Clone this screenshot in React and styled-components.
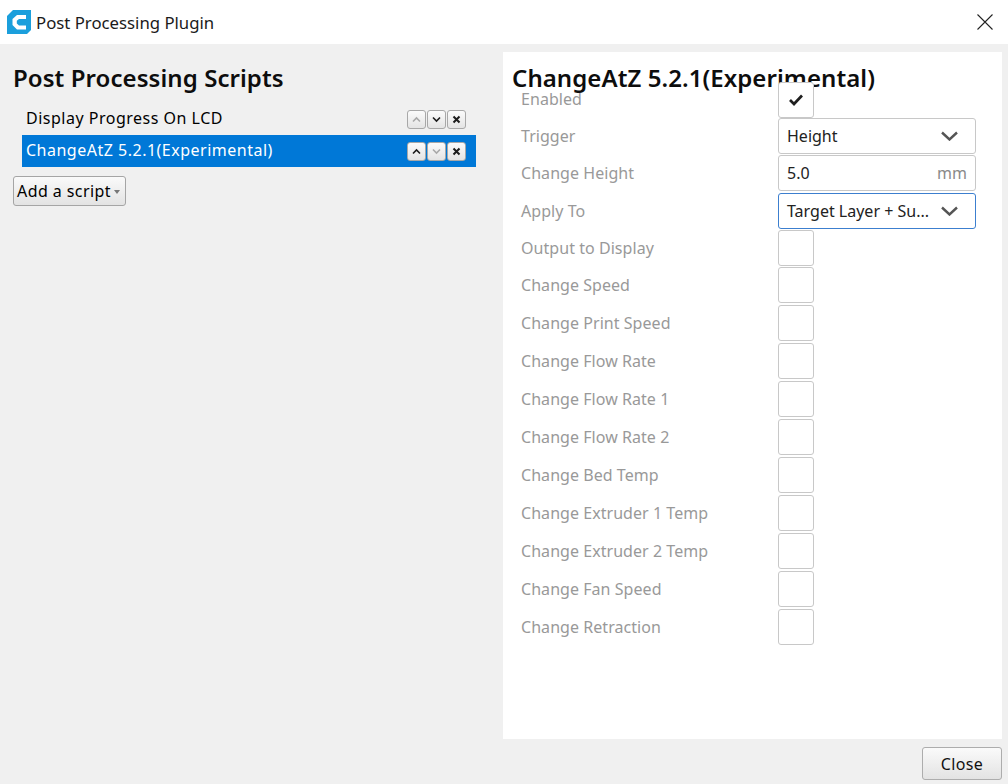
import React from "react";
import styled, { createGlobalStyle } from "styled-components";

const Global = createGlobalStyle`
  html, body { margin: 0; padding: 0; background: #efefef; }
  * { box-sizing: border-box; }
`;

const Window = styled.div`
  width: 1008px; height: 784px; overflow: hidden;
  display: flex; flex-direction: column;
  background: #f0f0f0;
  font-family: "Noto Sans", sans-serif;
  color: #111;
`;
const TitleBar = styled.header`
  height: 44px; flex: none; background: #fff;
  display: flex; align-items: center;
  padding: 0 14px 0 7px; gap: 5px;
`;
const TitleText = styled.div`
  flex: 1; font-size: 16.75px; color: #1a1a1a;
`;
const Body = styled.main`
  height: 695px; flex: none; display: flex; padding-top: 8px;
`;
const LeftPane = styled.section`
  width: 503px; flex: none; padding: 11px 27px 0 13px;
`;
const PaneHeading = styled.h1`
  margin: 0; font-size: 24px; line-height: 30px; font-weight: 600; color: #0d0d0d;
  letter-spacing: 0.07px; white-space: nowrap;
`;
const ScriptList = styled.div`
  margin: 10px 0 0 9px; display: flex; flex-direction: column;
`;
const ScriptRow = styled.div`
  height: 32px; padding: 0 10px 0 4px;
  display: flex; align-items: center; justify-content: space-between;
  background: ${p => (p.$selected ? "#0078d7" : "transparent")};
  color: ${p => (p.$selected ? "#fff" : "#000")};
`;
const ScriptName = styled.span`
  margin-bottom: 2px; font-size: 16px; letter-spacing: 0.5px;
`;
const RowButtons = styled.div`
  display: flex; gap: 1px;
`;
const MiniButton = styled.button`
  width: 19px; height: 19px; padding: 0; display: flex; align-items: center; justify-content: center;
  border: 1px solid #a8a8a8; border-radius: 3px;
  background: linear-gradient(#fbfbfb, #e4e4e4);
  color: ${p => (p.$dim ? "#a9a9a9" : "#1c1c1c")};
`;
const AddButton = styled.button`
  margin-top: 9px; width: 113px; height: 30px; padding: 0 0 1px 3px;
  display: flex; align-items: center;
  border: 1px solid #a5a5a5; border-radius: 3px;
  background: linear-gradient(#fafafa, #e3e3e3);
  font: 16px "Noto Sans", sans-serif; color: #000; letter-spacing: 0.43px;
`;
const Caret = styled.span`
  margin-left: 3px; margin-top: 2px; width: 0; height: 0;
  border-left: 3.5px solid transparent; border-right: 3.5px solid transparent;
  border-top: 4px solid #777;
`;
const RightPane = styled.section`
  width: 499px; height: 687px; flex: none; background: #fff; padding: 11px 0 0 9px;
`;
const SettingsList = styled.div`
  margin-top: -11px; padding-left: 9px;
  display: flex; flex-direction: column; position: relative;
`;
const SettingRow = styled.div`
  height: ${p => p.$h}px; display: flex; align-items: flex-start;
`;
const SettingLabel = styled.div`
  width: 257px; height: 36px; line-height: ${p => p.$lh}px; font-size: 16px; letter-spacing: 0.05px; color: #999;
`;
const CheckBox = styled.div`
  width: 36px; height: 36px; border: 1px solid #c8c8c8; border-radius: 3px; background: #fff;
  display: flex; align-items: center; justify-content: center;
`;
const Field = styled.div`
  width: 198px; height: 36px; padding: 0 8px;
  border: 1px solid ${p => (p.$focused ? "#3c7fcf" : "#c8c8c8")}; border-radius: 3px;
  display: flex; align-items: center; justify-content: space-between;
  font-size: 16px; color: #222; white-space: nowrap;
`;
const SelectField = styled(Field)`
  padding-right: 17px;
`;
const Unit = styled.span`
  color: #8a8a8a;
`;
const Footer = styled.footer`
  flex: 1; display: flex; justify-content: flex-end; align-items: flex-start; padding: 8px 6px 0 0;
`;
const CloseButton = styled.button`
  width: 80px; height: 33px; padding: 0;
  border: 1px solid #adadad; border-radius: 3px;
  background: linear-gradient(#fafafa, #e3e3e3);
  font: 16px "Noto Sans", sans-serif; color: #111; letter-spacing: 0.4px;
`;
const WindowClose = styled.button`
  width: 18px; height: 18px; padding: 0; border: 0; background: none; display: flex;
`;

const Logo = () => (
  <svg width="24" height="24" viewBox="0 0 24 24">
    <path d="M6 0H24V20L20 24H0V6Z" fill="#1b9fdc" />
    <path d="M19 5H10L5.5 9V15L10 19.5H19V15.5H12L9.8 13.5V10.8L12 9H19Z" fill="#fff" />
  </svg>
);
const Up = () => (
  <svg width="11" height="9" viewBox="0 0 11 9"><path d="M2 6.5L5.5 3L9 6.5" fill="none" stroke="currentColor" strokeWidth="1.6" /></svg>
);
const Down = () => (
  <svg width="11" height="9" viewBox="0 0 11 9"><path d="M2 2.5L5.5 6L9 2.5" fill="none" stroke="currentColor" strokeWidth="1.6" /></svg>
);
const Cross = () => (
  <svg width="9" height="9" viewBox="0 0 9 9"><path d="M1.5 1.5L7.5 7.5M7.5 1.5L1.5 7.5" fill="none" stroke="currentColor" strokeWidth="2" /></svg>
);
const Chevron = () => (
  <svg width="17" height="10" viewBox="0 0 17 10"><path d="M1 1.5L8.5 8.5L16 1.5" fill="none" stroke="#555" strokeWidth="2.4" /></svg>
);
const Check = () => (
  <svg width="14" height="12" viewBox="0 0 14 12"><path d="M1 6L5 10L13 1.5" fill="none" stroke="#1f1f1f" strokeWidth="2.7" /></svg>
);

const settings = [
  { label: "Enabled", h: 36, lh: 35, checked: true },
  { label: "Trigger", h: 37, select: "Height" },
  { label: "Change Height", h: 38, unit: "5.0" },
  { label: "Apply To", h: 37, select: "Target Layer + Su...", focused: true },
  { label: "Output to Display", h: 37 },
  { label: "Change Speed", h: 38 },
  { label: "Change Print Speed", h: 38 },
  { label: "Change Flow Rate", h: 38 },
  { label: "Change Flow Rate 1", h: 38 },
  { label: "Change Flow Rate 2", h: 38 },
  { label: "Change Bed Temp", h: 38 },
  { label: "Change Extruder 1 Temp", h: 38 },
  { label: "Change Extruder 2 Temp", h: 38 },
  { label: "Change Fan Speed", h: 38 },
  { label: "Change Retraction", h: 38 },
];

function Control({ s }) {
  if (s.select) return <SelectField $focused={s.focused}>{s.select}<Chevron /></SelectField>;
  if (s.unit) return <Field>{s.unit}<Unit>mm</Unit></Field>;
  return <CheckBox>{s.checked && <Check />}</CheckBox>;
}

export default function App() {
  return (
    <Window>
      <Global />
      <TitleBar>
        <Logo />
        <TitleText>Post Processing Plugin</TitleText>
        <WindowClose aria-label="Close window">
          <svg width="18" height="18" viewBox="0 0 18 18"><path d="M1.5 1.5L16.5 16.5M16.5 1.5L1.5 16.5" stroke="#222" strokeWidth="1.1" fill="none" /></svg>
        </WindowClose>
      </TitleBar>
      <Body>
        <LeftPane>
          <PaneHeading>Post Processing Scripts</PaneHeading>
          <ScriptList>
            <ScriptRow>
              <ScriptName>Display Progress On LCD</ScriptName>
              <RowButtons>
                <MiniButton $dim><Up /></MiniButton>
                <MiniButton><Down /></MiniButton>
                <MiniButton><Cross /></MiniButton>
              </RowButtons>
            </ScriptRow>
            <ScriptRow $selected>
              <ScriptName>ChangeAtZ 5.2.1(Experimental)</ScriptName>
              <RowButtons>
                <MiniButton><Up /></MiniButton>
                <MiniButton $dim><Down /></MiniButton>
                <MiniButton><Cross /></MiniButton>
              </RowButtons>
            </ScriptRow>
          </ScriptList>
          <AddButton>Add a script<Caret /></AddButton>
        </LeftPane>
        <RightPane>
          <PaneHeading>ChangeAtZ 5.2.1(Experimental)</PaneHeading>
          <SettingsList>
            {settings.map(s => (
              <SettingRow key={s.label} $h={s.h}>
                <SettingLabel $lh={s.lh || 37}>{s.label}</SettingLabel>
                <Control s={s} />
              </SettingRow>
            ))}
          </SettingsList>
        </RightPane>
      </Body>
      <Footer>
        <CloseButton>Close</CloseButton>
      </Footer>
    </Window>
  );
}
